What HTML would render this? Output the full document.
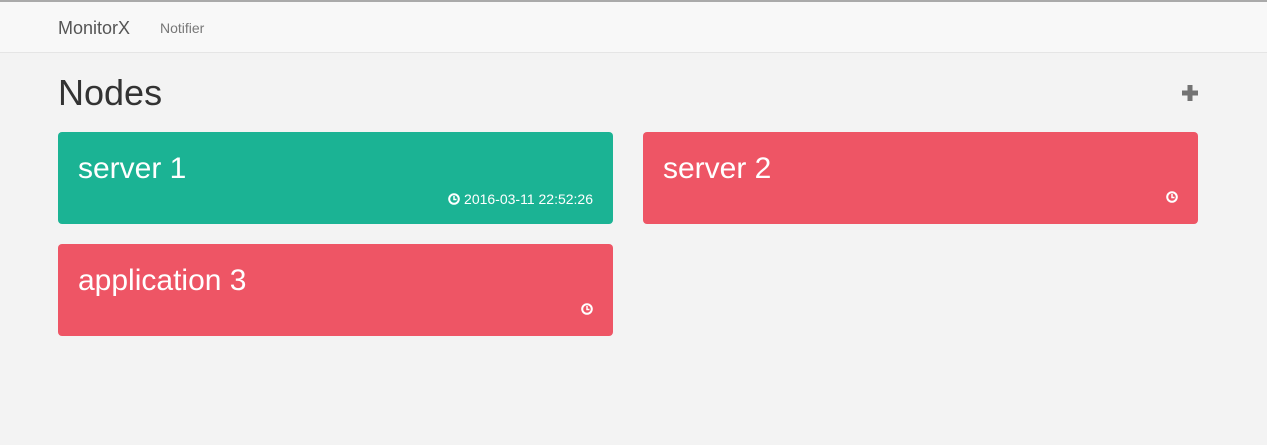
<!DOCTYPE html>
<html><head><style>
body{margin:0;width:1267px;height:445px;background:#f3f3f3;font-family:"Liberation Sans",sans-serif;position:relative;overflow:hidden}
.top{position:absolute;left:0;top:0;width:1267px;height:2px;background:#aaa}
.nav{position:absolute;left:0;top:2px;width:1267px;height:50px;background:#f8f8f8;border-bottom:1px solid #e5e5e5}
.brand{position:absolute;left:58px;top:16px;font-size:18px;color:#555}
.link{position:absolute;left:160px;top:18px;font-size:14px;color:#777}
h1{position:absolute;left:58px;top:72px;margin:0;font-size:36px;font-weight:normal;color:#333}
.plus{position:absolute;left:1182px;top:85px}
.card{position:absolute;width:555px;height:92px;border-radius:4px;color:#fff}
.card .t{position:absolute;left:20px;top:20px;font-size:30px}
.card .d{position:absolute;right:20px;top:59px;font-size:14px;display:flex;align-items:center;gap:4px}
.g{background:#1bb394}.r{background:#ee5565}
</style></head><body>
<div class="top"></div>
<div class="nav"><div class="brand">MonitorX</div><div class="link">Notifier</div></div>
<h1>Nodes</h1>
<svg class="plus" width="16" height="16" viewBox="0 0 16 16"><path d="M5.5 0h5v5.5H16v5h-5.5V16h-5v-5.5H0v-5h5.5z" fill="#737373"/></svg>
<div class="card g" style="left:58px;top:132px"><div class="t">server 1</div><div class="d"><svg width="12" height="12" viewBox="0 0 12 12"><circle cx="6" cy="6" r="4.8" fill="none" stroke="#fff" stroke-width="2"/><path d="M6 3v3.5H8.5" fill="none" stroke="#fff" stroke-width="1.5"/></svg>2016-03-11 22:52:26</div></div>
<div class="card r" style="left:643px;top:132px"><div class="t">server 2</div><div class="d"><svg width="12" height="12" viewBox="0 0 12 12"><circle cx="6" cy="6" r="4.8" fill="none" stroke="#fff" stroke-width="2"/><path d="M6 3v3.5H8.5" fill="none" stroke="#fff" stroke-width="1.5"/></svg></div></div>
<div class="card r" style="left:58px;top:244px"><div class="t">application 3</div><div class="d"><svg width="12" height="12" viewBox="0 0 12 12"><circle cx="6" cy="6" r="4.8" fill="none" stroke="#fff" stroke-width="2"/><path d="M6 3v3.5H8.5" fill="none" stroke="#fff" stroke-width="1.5"/></svg></div></div>
</body></html>
